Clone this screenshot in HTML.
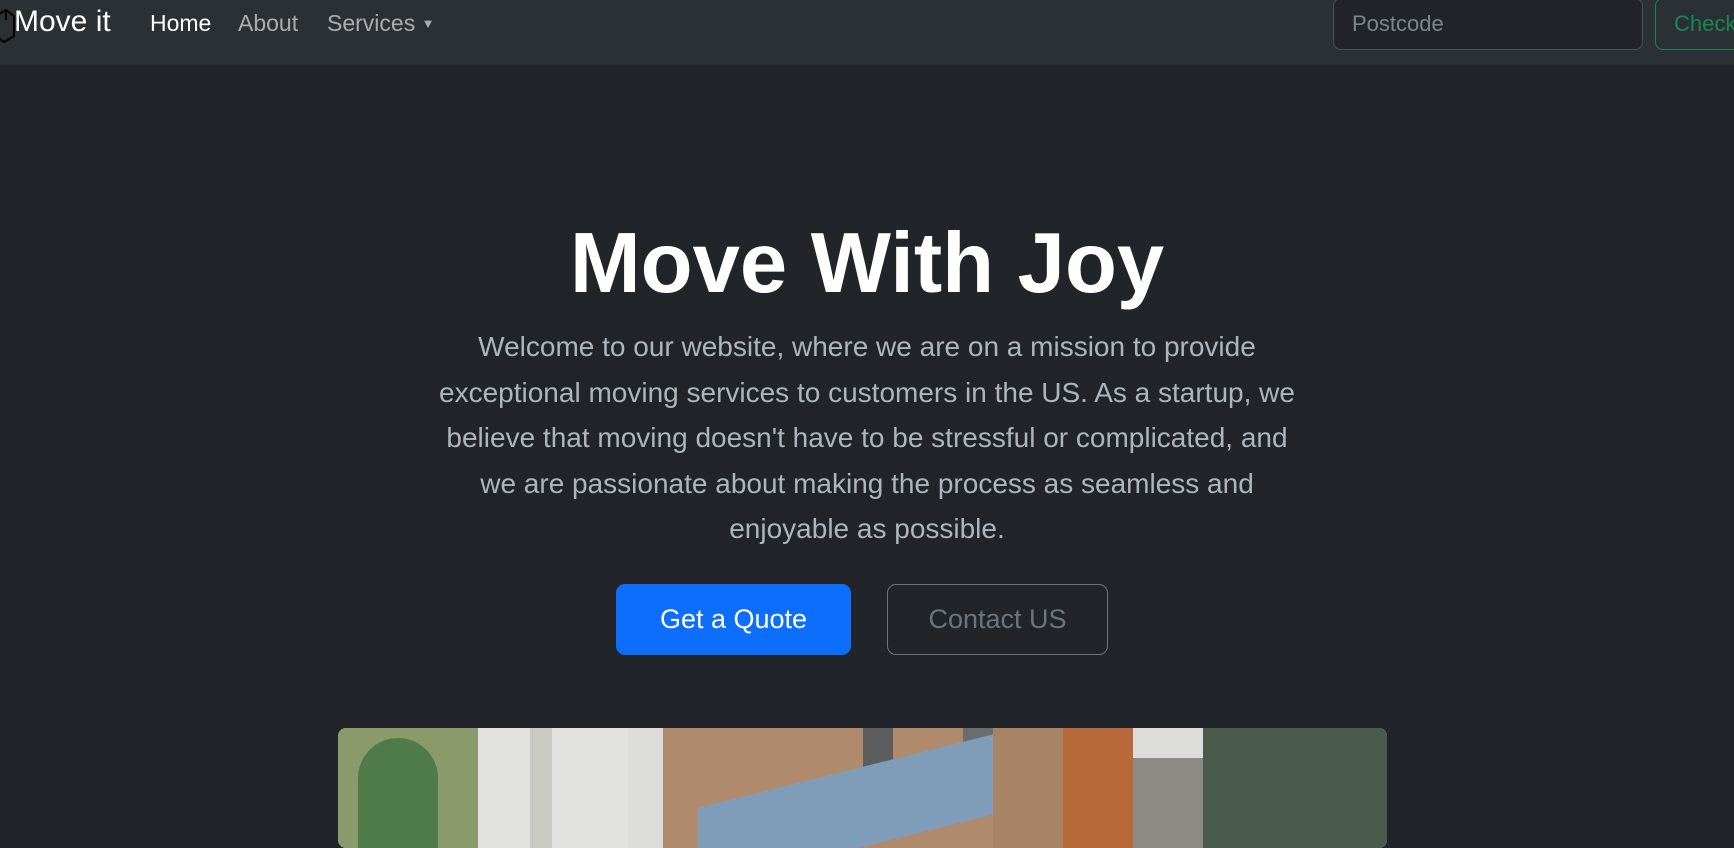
<!DOCTYPE html>
<html><head><style>
*{box-sizing:border-box;margin:0;padding:0}
body{width:1734px;height:819px;overflow:hidden;background:#212529;font-family:"Liberation Sans",sans-serif;position:relative}
.nav{position:absolute;left:0;top:0;width:1734px;height:65px;background:#2b3035}
.brand{position:absolute;left:14px;top:5px;color:#fff;font-size:30px}
.cube{position:absolute;left:-6px;top:8px}
.link{position:absolute;top:10px;font-size:23px;color:rgba(255,255,255,.6)}
.inp{position:absolute;left:1333px;top:-2px;width:310px;height:52px;border:1px solid #495057;border-radius:8px;background:#212529;color:#7d858d;font-size:22px;padding:12px 18px}
.chk{position:absolute;left:1655px;top:-2px;width:120px;height:52px;border:1px solid #198754;border-radius:8px;color:#198754;font-size:22px;padding:12px 18px}
h1{position:absolute;left:0;width:1734px;top:215px;text-align:center;color:#fff;font-size:85px;font-weight:bold}
p{position:absolute;left:0;width:1734px;top:324px;text-align:center;color:#adb5bd;font-size:28px;line-height:45.5px;white-space:nowrap}
.b1{position:absolute;left:616px;top:584px;width:235px;height:71px;background:#0d6efd;border-radius:9px;color:#fff;font-size:27px;text-align:center;line-height:71px}
.b2{position:absolute;left:887px;top:584px;width:221px;height:71px;border:1px solid #6c757d;border-radius:9px;color:#6c757d;font-size:27px;text-align:center;line-height:69px}
.img{position:absolute;left:338px;top:728px;width:1049px;height:120px;border-radius:8px;overflow:hidden;background:#dcdcda}
.img div{position:absolute}
</style></head><body>
<div class="nav">
<svg class="cube" width="22" height="36" viewBox="0 0 22 36"><path d="M2 8 L12 2 L20 8 L20 28 L10 34 L2 28 Z M12 2 L12 12" fill="none" stroke="#000" stroke-width="2"/></svg>
<div class="brand">Move it</div>
<div class="link" style="left:150px;color:#fff">Home</div>
<div class="link" style="left:238px">About</div>
<div class="link" style="left:327px">Services <span style="font-size:13px;position:relative;top:-3px">▼</span></div>
<div class="inp">Postcode</div>
<div class="chk">Check</div>
</div>
<h1>Move With Joy</h1>
<p>Welcome to our website, where we are on a mission to provide<br>exceptional moving services to customers in the US. As a startup, we<br>believe that moving doesn't have to be stressful or complicated, and<br>we are passionate about making the process as seamless and<br>enjoyable as possible.</p>
<div class="b1">Get a Quote</div>
<div class="b2">Contact US</div>
<div class="img">
<div style="left:0;top:0;width:140px;height:120px;background:#8a9a6a"></div>
<div style="left:20px;top:10px;width:80px;height:110px;background:#4f7a4a;border-radius:40px 40px 0 0"></div>
<div style="left:140px;top:0;width:150px;height:120px;background:#e2e3e1"></div>
<div style="left:192px;top:0;width:22px;height:120px;background:#c9cbc0"></div>
<div style="left:325px;top:0;width:330px;height:120px;background:#b08a6c"></div>
<div style="left:525px;top:0;width:30px;height:60px;background:#5b5d5e"></div>
<div style="left:625px;top:0;width:30px;height:60px;background:#6a6c6d"></div>
<div style="left:360px;top:40px;width:320px;height:80px;background:#7f9cb8;transform:skewY(-14deg)"></div>
<div style="left:655px;top:0;width:70px;height:120px;background:#a88466"></div>
<div style="left:725px;top:0;width:70px;height:120px;background:#b8693a"></div>
<div style="left:795px;top:30px;width:70px;height:90px;background:#8b8a84"></div>
<div style="left:865px;top:0;width:184px;height:120px;background:#4a5a4c"></div>
</div>
</body></html>
